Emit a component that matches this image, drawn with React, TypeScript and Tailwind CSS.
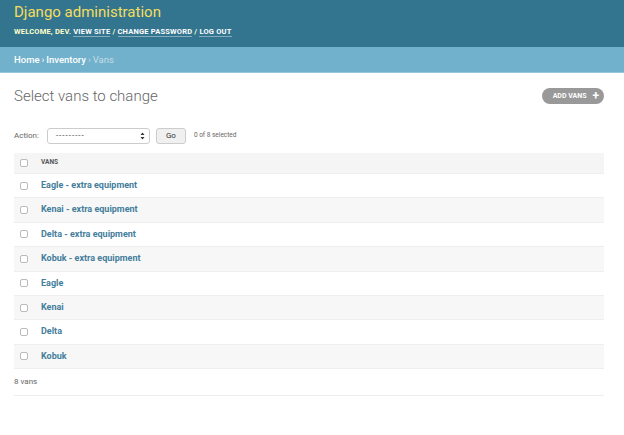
const rows = [
  "Eagle - extra equipment",
  "Kenai - extra equipment",
  "Delta - extra equipment",
  "Kobuk - extra equipment",
  "Eagle",
  "Kenai",
  "Delta",
  "Kobuk",
];

function Box() {
  return <span className="inline-block w-[8px] h-[8px] rounded-[2px] border border-[#bbb] bg-white" />;
}

export default function App() {
  return (
    <div className="w-[624px] h-[435px] bg-white text-[#333]" style={{ fontFamily: "Roboto, 'Liberation Sans', sans-serif" }}>
      <div className="h-[47px] bg-[#33758f] px-[14px] pt-[2px]">
        <div className="text-[15px] leading-[20px] text-[#f5dd5d]">Django administration</div>
        <div className="mt-[5px] text-[7.5px] leading-[9px] font-bold uppercase text-[#ffc] tracking-[0.2px]">
          Welcome, <span>dev</span>.{" "}
          <span className="text-white border-b border-white/40">View site</span> /{" "}
          <span className="text-white border-b border-white/40">Change password</span> /{" "}
          <span className="text-white border-b border-white/40">Log out</span>
        </div>
      </div>
      <div className="h-[26px] bg-[#71b1cc] border-b border-[#98c8dc] px-[14px] pt-[2px] flex items-center text-[9.5px] text-white">
        <span className="font-medium">Home</span>
        <span className="mx-[2px]">›</span>
        <span className="font-medium">Inventory</span>
        <span className="mx-[2px] text-[#c4dce8]">›</span>
        <span className="text-[#c4dce8]">Vans</span>
      </div>
      <div className="px-[14px]">
        <div className="w-[590px] flex items-center justify-between pt-[13px]">
          <h1 className="text-[15px] leading-[20px] text-[#666] font-light">Select vans to change</h1>
          <div className="h-[16px] rounded-full bg-[#999] pl-[11px] pr-[5px] flex items-center gap-[6px] text-white text-[7px] font-bold uppercase">
            Add vans
            <span className="text-[12px] leading-none font-bold">+</span>
          </div>
        </div>
        <div className="flex items-center mt-[21px] h-[17px] text-[8px] text-[#666]">
          <span>Action:</span>
          <div className="ml-[8px] w-[103px] h-[16px] border border-[#ccc] rounded-[3px] flex items-center justify-between pl-[8px] pr-[4px] text-[#333]">
            <span className="tracking-[1px]">---------</span>
            <svg width="5" height="8" viewBox="0 0 5 8">
              <path d="M2.5 0.5 L4.5 3 L0.5 3 Z M2.5 7.5 L4.5 5 L0.5 5 Z" fill="#333" />
            </svg>
          </div>
          <div className="ml-[6px] w-[30px] h-[16px] border border-[#ccc] rounded-[3px] bg-[#f0f0f0] flex items-center justify-center text-[8px] text-[#333]">Go</div>
          <span className="ml-[8px] text-[6.5px]">0 of 8 selected</span>
        </div>
        <div className="mt-[9px] w-[590px]">
          <div className="h-[21px] bg-[#f5f5f5] border-b border-[#eee] flex items-center px-[6px]">
            <Box />
            <span className="ml-[13px] text-[6.5px] font-bold uppercase text-[#555]">Vans</span>
          </div>
          {rows.map((r, i) => (
            <div key={i} className={`h-[24.4px] flex items-center px-[6px] border-b border-[#eee] ${i % 2 === 1 ? "bg-[#f7f7f7]" : "bg-white"}`}>
              <Box />
              <span className="ml-[13px] text-[9px] font-bold text-[#447e9b]">{r}</span>
            </div>
          ))}
          <div className="h-[27px] flex items-center text-[8px] text-[#666] border-b border-[#eee]">8 vans</div>
        </div>
      </div>
    </div>
  );
}
